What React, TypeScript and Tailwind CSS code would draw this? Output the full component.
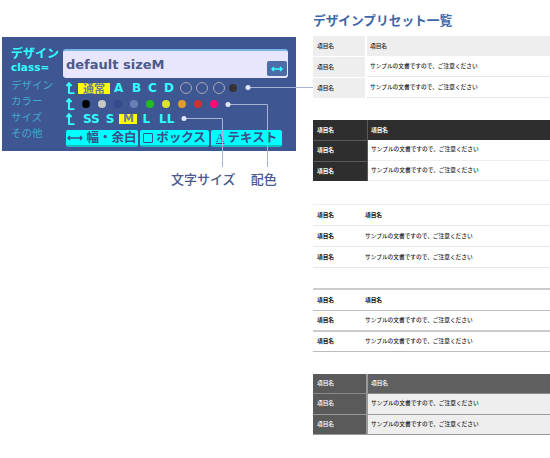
const jp = "font-['Noto_Sans_CJK_JP',sans-serif]";
const dv = "font-['DejaVu_Sans','Noto_Sans_CJK_JP',sans-serif]";

function UpArrow() {
  return (
    <svg width="9" height="12" viewBox="0 0 9 12" className="shrink-0">
      <path d="M3 11.5V1.5M0.5 4L3 1.2L5.5 4M3 10.5Q3 11.2 4 11.2H8.5" stroke="#33ffff" strokeWidth="2" fill="none" />
    </svg>
  );
}

function Cell({ w, className, children }: { w?: string; className?: string; children?: React.ReactNode }) {
  return <div className={`${w ?? ""} flex items-center ${className ?? ""}`}>{children}</div>;
}

const note = "サンプルの文書ですので、ご注意ください";

export default function App() {
  const dots = ["#000000", "#c8c8c8", "#344a8c", "#6a80b0", "#22bb22", "#e0e030", "#e09a30", "#cc3333", "#ff0b7a"];
  return (
    <div className={`relative w-[550px] h-[458px] bg-white overflow-hidden flex ${jp}`}>
      {/* left side */}
      <div className="w-[313px] shrink-0">
        <div className="ml-[2px] mt-[37px] w-[294px] h-[114px] bg-[#3e5692] flex">
          <div className="w-[61px] shrink-0 pl-[9px] pt-[7px]">
            <div className="text-[12px] leading-[17px] font-bold text-[#33ffff] whitespace-nowrap">デザイン</div>
            <div className={`${dv} text-[10.5px] leading-[12px] font-bold text-[#33ffff]`}>class=</div>
            <div className="mt-[4px] flex flex-col text-[10.5px] leading-[16px] text-[#43a9cf]">
              <span>デザイン</span>
              <span>カラー</span>
              <span>サイズ</span>
              <span>その他</span>
            </div>
          </div>
          <div className="flex-1 pt-[12px] pr-[8px]">
            <div className="relative h-[29px] w-[225px] bg-[#e8e6fc] border-t-2 border-[#78b4e6] rounded-[3px] flex items-center pl-[3px]">
              <span className={`${dv} text-[13px] font-bold text-[#4b5a8c]`}>default sizeM</span>
              <div className="absolute right-[1px] bottom-[2px] w-[20px] h-[15px] bg-[#4a6ca8] rounded-[2px] flex items-center justify-center">
                <svg width="12" height="6" viewBox="0 0 12 6">
                  <path d="M1 3H11M3 1L1 3L3 5M9 1L11 3L9 5" stroke="#33ffff" strokeWidth="1.4" fill="none" />
                </svg>
              </div>
            </div>
            {/* row 1 */}
            <div className={`${dv} h-[16px] mt-[2px] pl-[3px] flex items-center text-[12px] font-bold text-[#33ffff]`}>
              <UpArrow />
              <span className={`${jp} ml-[3px] h-[11px] w-[32px] bg-[#ffff00] text-[#6a7aa0] text-[11px] leading-[11px] flex items-center justify-center`}>通常</span>
              <span className="ml-[4px] w-[10px]">A</span>
              <span className="ml-[8px] w-[10px]">B</span>
              <span className="ml-[6px] w-[10px]">C</span>
              <span className="ml-[6px] w-[10px]">D</span>
              <span className="ml-[6px] w-[12px] h-[12px] rounded-full border-[1.5px] border-[#a8a8b8]" />
              <span className="ml-[4px] w-[12px] h-[12px] rounded-full border-[1.5px] border-[#a8a8b8]" />
              <span className="ml-[5px] w-[12px] h-[12px] rounded-full border-[1.5px] border-[#a8a8b8]" />
              <span className="ml-[4px] w-[8px] h-[8px] rounded-full bg-[#333333]" />
            </div>
            {/* row 2 */}
            <div className="h-[15px] pl-[3px] flex items-center">
              <UpArrow />
              <div className="ml-[7px] flex gap-[8px]">
                {dots.map((c) => (
                  <span key={c} className="w-[8px] h-[8px] rounded-full" style={{ backgroundColor: c }} />
                ))}
              </div>
            </div>
            {/* row 3 */}
            <div className={`${dv} h-[15px] pl-[3px] flex items-center text-[12px] font-bold text-[#33ffff]`}>
              <UpArrow />
              <span className="ml-[8px]">SS</span>
              <span className="ml-[6px]">S</span>
              <span className="ml-[5px] h-[10px] w-[18px] bg-[#ffff00] text-[#6a7aa0] text-[11px] leading-[10px] flex items-center justify-center">M</span>
              <span className="ml-[5px]">L</span>
              <span className="ml-[9px]">LL</span>
            </div>
            {/* row 4 */}
            <div className="mt-[4px] pl-[3px] flex gap-[2px] text-[12.5px] font-bold text-[#3b4d84]">
              <div className="w-[72px] h-[17px] bg-[#00ffff] rounded-[2px] border-b-2 border-[#18b8c8] flex items-center justify-center gap-[3px] leading-none">
                <svg width="16" height="6" viewBox="0 0 16 6">
                  <path d="M1 3H15M3 1L1 3L3 5M13 1L15 3L13 5" stroke="#3b4d84" strokeWidth="1.3" fill="none" />
                </svg>
                <span>幅・余白</span>
              </div>
              <div className="w-[69px] h-[17px] bg-[#00ffff] rounded-[2px] border-b-2 border-[#18b8c8] flex items-center justify-center gap-[3px] leading-none">
                <span className="w-[10px] h-[10px] border-[1.5px] border-[#3b4d84] rounded-[1px]" />
                <span>ボックス</span>
              </div>
              <div className="w-[71px] h-[17px] bg-[#00ffff] rounded-[2px] border-b-2 border-[#18b8c8] flex items-center justify-center gap-[3px] leading-none">
                <span className="font-['Liberation_Serif',serif] font-normal underline text-[12px]">A</span>
                <span>テキスト</span>
              </div>
            </div>
          </div>
        </div>
        <div className="mt-[20px] flex text-[13px] leading-[15px] font-medium text-[#4a5a90]">
          <span className="ml-[171px]">文字サイズ</span>
          <span className="ml-[15px]">配色</span>
        </div>
      </div>

      {/* connector lines */}
      <svg className="absolute left-0 top-0 pointer-events-none" width="550" height="458">
        <g stroke="#a9b2d4" strokeWidth="1" fill="none">
          <path d="M248 87.5H313" />
          <path d="M228 104.5H267.5V167" />
          <path d="M184 118.5H222.5V167" />
        </g>
        <g fill="#e2e6f6">
          <circle cx="248" cy="87.5" r="2.5" />
          <circle cx="228" cy="104.5" r="2.5" />
          <circle cx="184" cy="118.5" r="2.5" />
        </g>
      </svg>

      {/* right side */}
      <div className="w-[237px] shrink-0 pt-[12px] text-[5.7px] font-medium">
        <div className="h-[16px] text-[12.7px] leading-[16px] font-bold text-[#4065a8] whitespace-nowrap">デザインプリセット一覧</div>

        {/* table 1 */}
        <div className="mt-[8px] text-[#222]">
          <div className="flex h-[20px] bg-[#eeeeee]">
            <Cell w="w-[54px]" className="pl-[4px] border-r-2 border-white">項目名</Cell>
            <Cell className="pl-[3px]">項目名</Cell>
          </div>
          {[0, 1].map((i) => (
            <div key={i} className="flex h-[21px] border-t border-white">
              <Cell w="w-[54px]" className="pl-[4px] bg-[#eeeeee] border-r-2 border-white">項目名</Cell>
              <Cell className="pl-[3px] flex-1 border-b border-[#e6e6e6]">{note}</Cell>
            </div>
          ))}
        </div>

        {/* table 2 */}
        <div className="mt-[22px] text-white font-bold">
          <div className="flex h-[20px] bg-[#2e2e2e]">
            <Cell w="w-[55px]" className="pl-[4px] border-r border-[#5a5a5a]">項目名</Cell>
            <Cell className="pl-[3px]">項目名</Cell>
          </div>
          {[0, 1].map((i) => (
            <div key={i} className="flex h-[20.5px]">
              <Cell w="w-[55px]" className="pl-[4px] bg-[#2e2e2e] border-t border-r border-[#5a5a5a]">項目名</Cell>
              <Cell className="pl-[3px] flex-1 font-medium text-[#222] border-b border-[#eeeeee]">{note}</Cell>
            </div>
          ))}
        </div>

        {/* table 3 */}
        <div className="mt-[23px] text-[#111] border-t border-[#eeeeee]">
          <div className="flex h-[21px] border-b border-[#e6e6e6] font-bold">
            <Cell w="w-[52px]" className="pl-[4px]">項目名</Cell>
            <Cell>項目名</Cell>
          </div>
          {[0, 1].map((i) => (
            <div key={i} className="flex h-[21px] border-b border-[#e6e6e6]">
              <Cell w="w-[52px]" className="pl-[4px] font-bold">項目名</Cell>
              <Cell className="text-[#222]">{note}</Cell>
            </div>
          ))}
        </div>

        {/* table 4 */}
        <div className="mt-[20px] text-[#111] border-t-2 border-[#cccccc]">
          <div className="flex h-[21px] border-b border-[#bbbbbb] font-bold">
            <Cell w="w-[52px]" className="pl-[4px]">項目名</Cell>
            <Cell>項目名</Cell>
          </div>
          <div className="flex h-[21px] border-b-2 border-[#cccccc]">
            <Cell w="w-[52px]" className="pl-[4px] font-bold">項目名</Cell>
            <Cell className="text-[#222]">{note}</Cell>
          </div>
          <div className="flex h-[20px] border-b border-[#bbbbbb]">
            <Cell w="w-[52px]" className="pl-[4px] font-bold">項目名</Cell>
            <Cell className="text-[#222]">{note}</Cell>
          </div>
        </div>

        {/* table 5 */}
        <div className="mt-[22px]">
          <div className="flex h-[20px] bg-[#606060] text-white border-b border-[#8a8a8a]">
            <Cell w="w-[55px]" className="pl-[4px] bg-[#5a5a5a] border-r-2 border-[#9a9a9a]">項目名</Cell>
            <Cell className="pl-[3px]">項目名</Cell>
          </div>
          {[0, 1].map((i) => (
            <div key={i} className="flex h-[20.5px] border-b border-[#9a9a9a]">
              <Cell w="w-[55px]" className="pl-[4px] bg-[#5a5a5a] text-white border-r-2 border-[#9a9a9a]">項目名</Cell>
              <Cell className="pl-[3px] flex-1 bg-[#eeeeee] text-[#222]">{note}</Cell>
            </div>
          ))}
        </div>
      </div>
    </div>
  );
}
